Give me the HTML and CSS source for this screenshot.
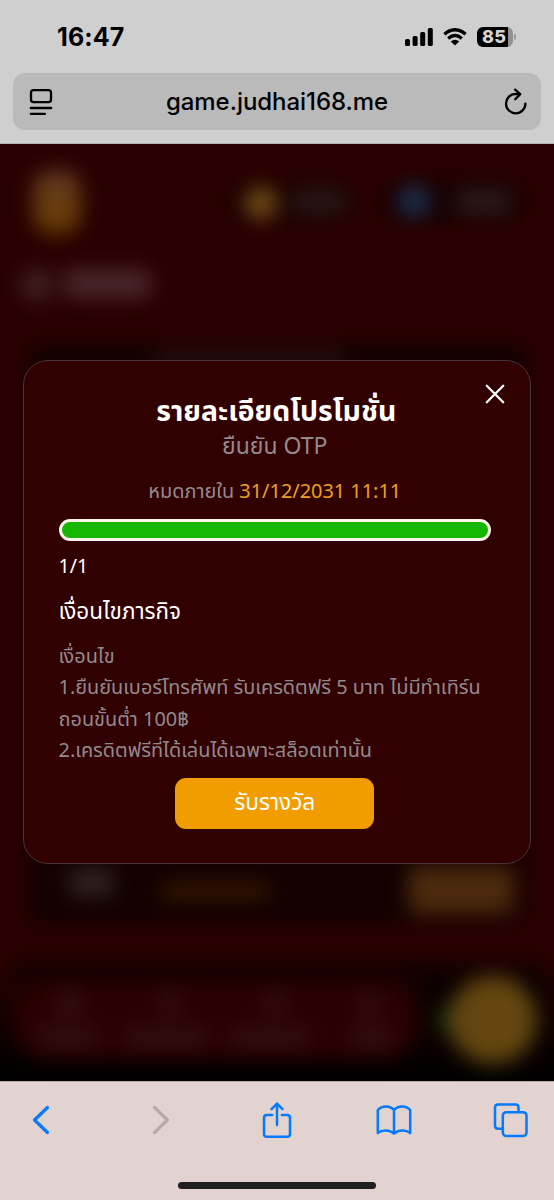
FILE: index.html
```html
<!DOCTYPE html>
<html lang="th">
<head>
<meta charset="utf-8">
<title>รายละเอียดโปรโมชั่น</title>
<link rel="stylesheet" href="styles.css">
</head>
<body>
<header class="browser-top">
  <div class="status">
    <span class="clock">16:47</span>
    <svg class="signal" width="28" height="18" viewBox="0 0 28 18"><rect x="0" y="11" width="5" height="7" rx="1.6"/><rect x="7.6" y="8" width="5" height="10" rx="1.6"/><rect x="15.2" y="4" width="5" height="14" rx="1.6"/><rect x="22.8" y="0" width="5" height="18" rx="1.6"/></svg>
    <svg class="wifi" width="24" height="18" viewBox="0 0 24 18"><path class="arc" d="M1.4 6.2Q12-2.8 22.6 6.2M5.2 10.5Q12 4.6 18.8 10.5"/><path d="M12 17.4L7.8 13.5Q12 9.8 16.2 13.5Z"/></svg>
    <div class="battery"><span class="level">85</span><i class="nub"></i></div>
  </div>
  <div class="address">
    <svg width="24" height="28" viewBox="0 0 24 28"><rect x="2" y="2.2" width="20" height="12" rx="2.6"/><path d="M1.8 20H22.2M1.8 25.8H16"/></svg>
    <span class="url">game.judhai168.me</span>
    <svg width="24" height="28" viewBox="0 0 24 28"><path d="M15.6 6.2L11.5 5.9A9.7 9.7 0 1 0 21.4 15.6M11.2 1.6L16.2 6.2L11.2 11.2"/></svg>
  </div>
</header>
<main class="page">
  <svg class="backdrop" width="554" height="937" viewBox="0 144 554 937" aria-hidden="true">
    <defs>
      <filter id="soft" filterUnits="userSpaceOnUse" x="-60" y="84" width="674" height="1057" color-interpolation-filters="sRGB"><feGaussianBlur stdDeviation="10"/></filter>
      <linearGradient id="crest" x2="0" y2="1"><stop offset="0" stop-color="#5c3826"/><stop offset=".4" stop-color="#683b12"/><stop offset="1" stop-color="#683c00"/></linearGradient>
      <linearGradient id="fade" x2="0" y2="1"><stop offset="0" stop-opacity="0"/><stop offset=".65" stop-opacity=".75"/><stop offset="1"/></linearGradient>
    </defs>
    <g filter="url(#soft)">
      <rect x="-60" y="84" width="674" height="1057" fill="#290000"/>
      <rect x="-60" y="960" width="674" height="121" fill="url(#fade)"/>
      <rect x="-60" y="1080" width="674" height="61"/>
      <rect x="33" y="170" width="48" height="64" rx="20" fill="url(#crest)"/>
      <rect x="228" y="181" width="126" height="41" rx="20" fill="#180000"/>
      <rect x="383" y="181" width="142" height="41" rx="20" fill="#150001"/>
      <circle cx="261" cy="203" r="17" fill="#6b4a16"/>
      <rect x="292" y="190" width="54" height="23" rx="8" fill="#2b1819"/>
      <circle cx="414" cy="201" r="16" fill="#1c304f"/>
      <rect x="455" y="190" width="57" height="23" rx="8" fill="#2d1b1c"/>
      <circle cx="37" cy="285" r="17" fill="#3e1e20"/>
      <rect x="63" y="269" width="89" height="29" rx="10" fill="#48262b"/>
      <rect x="28" y="344" width="498" height="580" rx="10" fill="#130000"/>
      <rect x="154" y="352" width="190" height="15" fill="#291113"/>
      <rect x="68" y="868" width="47" height="29" rx="8" fill="#302020"/>
      <rect x="160" y="882" width="111" height="18" rx="7" fill="#351600"/>
      <rect x="408" y="866" width="106" height="48" rx="8" fill="#4b2a0d"/>
      <rect x="12" y="959" width="530" height="28" fill="#160000"/>
      <rect x="418" y="975" width="128" height="90" fill="#080000"/>
      <rect x="12" y="982" width="408" height="78" rx="38" fill="#2a0000"/>
      <g fill="#310f10">
        <circle cx="70" cy="1003" r="14"/><circle cx="170" cy="1002" r="12"/><circle cx="275" cy="1002" r="12"/><circle cx="370" cy="1004" r="12"/>
        <rect x="37" y="1027" width="61" height="20"/><rect x="124" y="1027" width="84" height="20"/><rect x="231" y="1027" width="78" height="20"/><rect x="350" y="1027" width="42" height="20"/>
      </g>
      <circle cx="452" cy="1020" r="16" fill="#1c2d0b"/>
      <circle cx="493" cy="1020" r="44" fill="#634610"/>
    </g>
  </svg>
  <section class="dialog" role="dialog">
    <svg class="close" width="20" height="20" viewBox="0 0 20 20"><path d="M1.8 1.8L18.2 18.2M18.2 1.8L1.8 18.2"/></svg>
    <h1 class="title">รายละเอียดโปรโมชั่น</h1>
    <p class="subtitle">ยืนยัน OTP</p>
    <p class="expiry">หมดภายใน <span class="date">31/12/2031 11:11</span></p>
    <div class="progress"></div>
    <p class="count">1/1</p>
    <h2 class="heading">เงื่อนไขภารกิจ</h2>
    <p class="terms">เงื่อนไข<br>1.ยืนยันเบอร์โทรศัพท์ รับเครดิตฟรี 5 บาท ไม่มีทำเทิร์น<br>ถอนขั้นต่ำ 100฿<br>2.เครดิตฟรีที่ได้เล่นได้เฉพาะสล็อตเท่านั้น</p>
    <button class="claim">รับรางวัล</button>
  </section>
</main>
<footer class="browser-bottom">
  <nav class="tools">
    <svg width="18" height="30" viewBox="0 0 18 30"><path d="M15.5 2.5L2.5 15L15.5 27.5"/></svg>
    <svg class="off" width="18" height="30" viewBox="0 0 18 30"><path d="M2.5 2.5L15.5 15L2.5 27.5"/></svg>
    <svg class="thin" width="30" height="38" viewBox="0 0 30 38"><path d="M10.2 14H4.8Q2 14 2 16.8V33Q2 35.8 4.8 35.8H25.2Q28 35.8 28 33V16.8Q28 14 25.2 14H19.8M15 24V3M9.5 8.2L15 2.5L20.5 8.2"/></svg>
    <svg class="thin" width="36" height="32" viewBox="0 0 36 32"><path d="M18 6C14 1.2 6 1.2 1.8 6V29C6 25.5 14 25.5 18 29.6C22 25.5 30 25.5 34.2 29V6C30 1.2 22 1.2 18 6V29"/></svg>
    <svg class="thin" width="35" height="35" viewBox="0 0 35 35"><path d="M9.5 25.8H5Q2 25.8 2 22.8V4.5Q2 1.5 5 1.5H22.5Q25.5 1.5 25.5 4.5V8.5"/><rect x="9.8" y="9.2" width="23.7" height="23.9" rx="3.5"/></svg>
  </nav>
  <div class="home"></div>
</footer>
</body>
</html>
```
FILE: styles.css
```css
* { box-sizing: border-box; }
body {
  margin: 0; width: 554px; height: 1200px; overflow: hidden;
  display: flex; flex-direction: column;
  font-family: "Noto Sans", "Noto Sans Thai", sans-serif;
}
h1, h2, p { margin: 0; font-weight: 400; white-space: nowrap; }
.browser-top { height: 144px; padding: 0 13px; background: #cfcfcf; border-bottom: 1px solid #bcb4b4; }
.status { height: 73px; padding: 1px 25px 0 44px; display: flex; align-items: center; }
.clock { flex: 1; font: 700 25px Inter, sans-serif; letter-spacing: .1px; }
.wifi { margin: 0 10px 0 10px; }
.arc { fill: none; stroke: #000; stroke-width: 3.3; }
.battery { display: flex; align-items: center; gap: 1px; }
.level {
  width: 36px; height: 20px; border-radius: 6px; padding-left: 5px;
  background: linear-gradient(90deg, #000 31px, #929292 31px);
  color: #d5d5d5; font: 800 18px/20px Inter, sans-serif; letter-spacing: .2px;
}
.nub { width: 2px; height: 6px; border-radius: 0 2px 2px 0; background: #999; }
.address {
  height: 57px; border-radius: 12px; padding: 0 13px 0 16px; background: #bababa;
  display: flex; align-items: center; justify-content: space-between;
}
.address svg { fill: none; stroke: #000; stroke-width: 2.3; stroke-linecap: round; stroke-linejoin: round; }
.url { margin-right: 3px; font: 500 24px Inter, sans-serif; letter-spacing: -.05px; }
.page { height: 937px; display: grid; justify-items: center; align-items: start; background: #290000; }
.backdrop, .dialog { grid-area: 1 / 1; }
.dialog {
  position: relative; width: 508px; height: 504px; margin-top: 216px; padding: 33px 39px 0 34.5px;
  border: 1px solid #48353a; border-radius: 25px; background: #310000;
  display: flex; flex-direction: column; color: #fff;
}
.close { position: absolute; right: 25px; top: 23px; fill: none; stroke: #fff; stroke-width: 2.3; stroke-linecap: round; }
.title { height: 34px; padding-left: 3px; font-size: 28.4px; line-height: 32px; font-weight: 700; text-align: center; }
.subtitle { height: 34px; font-size: 23px; line-height: 35px; text-align: center; color: #938a8d; }
.expiry { height: 57px; font-size: 19.9px; line-height: 57px; text-align: center; color: #938a8d; }
.date { color: #eaa21e; }
.progress { height: 22px; border: 3px solid #fff3ea; border-radius: 11px; background: #15b703; }
.count { height: 50px; font-size: 19.5px; line-height: 50px; }
.heading { height: 40px; font-size: 22.5px; line-height: 39px; }
.terms { height: 147px; padding-top: 9px; font-size: 19.9px; line-height: 31.3px; color: #938a8d; }
.claim {
  align-self: center; width: 199px; height: 51px; border: 0; border-radius: 11px; padding: 0 0 3px;
  background: #f19d00; color: #fff; font: 400 22.6px/48px "Noto Sans", "Noto Sans Thai", sans-serif;
}
.browser-bottom { flex: 1; background: #e2d3d0; border-top: 1px solid #b9aaa8; }
.tools {
  height: 76px; padding-left: 32px; display: grid; align-items: center;
  grid-template-columns: 120px 110px 114px 117px 35px;
}
.tools svg { fill: none; stroke: #057aff; stroke-width: 3.2; stroke-linecap: round; stroke-linejoin: round; }
.tools .thin { stroke-width: 2.5; }
.tools .off { stroke: #b5aaa8; }
.home { width: 198px; height: 7px; margin: 24px auto 0; border-radius: 4px; background: #202020; }
```
